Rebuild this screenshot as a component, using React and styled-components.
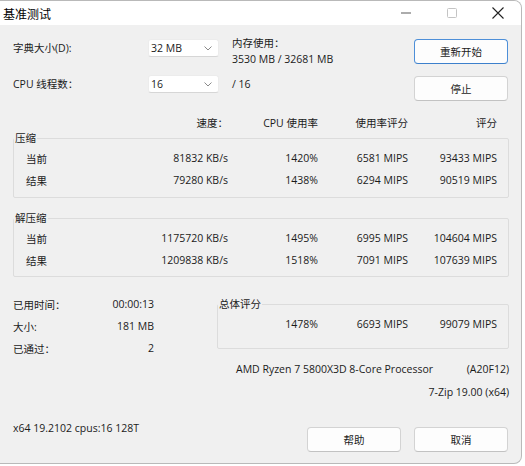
import React from 'react'
import styled, { createGlobalStyle } from 'styled-components'

const GlobalStyle = createGlobalStyle`
  html, body {
    margin: 0;
    background: #ffffff;
  }
  * {
    box-sizing: border-box;
  }
`

const Window = styled.div`
  width: 522px;
  height: 464px;
  background: #f0f0f0;
  border: 1px solid #b9b9b9;
  border-left: none;
  border-radius: 0 8px 8px 0;
  overflow: hidden;
  display: flex;
  flex-direction: column;
  font-family: "Open Sans", "Noto Sans CJK SC", sans-serif;
  font-size: 10.5px;
  color: #1b1b1b;
`

const TitleBar = styled.div`
  height: 24px;
  background: #ffffff;
  display: flex;
  align-items: center;
  padding-left: 3px;
`

const Title = styled.div`
  font-family: "Noto Sans CJK SC", sans-serif;
  font-size: 12px;
  color: #000;
`

const Controls = styled.div`
  margin-left: auto;
  display: flex;
  height: 100%;
`

const Control = styled.div`
  width: 46px;
  height: 100%;
  display: flex;
  align-items: center;
  justify-content: center;
`

const Body = styled.div`
  flex: 1;
  padding-left: 13px;
  width: 509px;
  display: flex;
  flex-direction: column;
`

const TopGrid = styled.div`
  display: grid;
  grid-template-columns: 135px 84px 182px 94px;
  grid-template-rows: 36px 26px;
  align-items: start;
  margin-top: 14px;
`

const Label = styled.div`
  line-height: 18px;
  white-space: nowrap;
`

const Combo = styled.div`
  width: 71px;
  height: 18px;
  background: #ffffff;
  border: 1px solid #ececec;
  border-bottom-color: #d6d6d6;
  border-radius: 3px;
  display: flex;
  align-items: center;
  justify-content: space-between;
  padding: 0 6px 0 2px;
  line-height: 16px;
`

const Memory = styled.div`
  margin-top: -4px;
  line-height: 16px;
  white-space: nowrap;
`

const Button = styled.div`
  width: 94px;
  height: 25px;
  margin-top: ${p => p.$top || 0}px;
  background: #fdfdfd;
  border: 1px solid ${p => (p.$primary ? '#4d8fd8' : '#d3d3d3')};
  border-bottom-color: ${p => (p.$primary ? '#3d80cc' : '#c2c2c2')};
  border-radius: 4px;
  display: flex;
  align-items: center;
  justify-content: center;
  font-family: "Noto Sans CJK SC", sans-serif;
  font-size: 10.5px;
`

const Row = styled.div`
  display: grid;
  grid-template-columns: ${p => p.$cols};
  height: ${p => p.$h || 22}px;
  margin-top: ${p => p.$top || 0}px;
  align-items: center;
  white-space: nowrap;
`

const Cell = styled.div`
  text-align: ${p => (p.$left ? 'left' : 'right')};
`

const Group = styled.fieldset`
  margin: ${p => p.$top || 0}px 0 0 ${p => p.$left || 0}px;
  padding: 0 0 ${p => p.$pb}px 0;
  width: ${p => p.$w}px;
  border: 1px solid #dcdcdc;
  border-radius: 2px;
  min-inline-size: 0;
`

const Legend = styled.legend`
  padding: 0 1px;
  margin-left: 0;
  line-height: 16px;
  font-family: "Noto Sans CJK SC", sans-serif;
`

const GroupRows = styled.div`
  padding: 1px 0 0 ${p => p.$pl || 0}px;
`

const Bottom = styled.div`
  display: flex;
  align-items: flex-start;
  margin-top: 16px;
`

const Stats = styled.div`
  width: 141px;
`

const InfoLine = styled.div`
  display: flex;
  justify-content: ${p => (p.$end ? 'flex-end' : 'space-between')};
  padding-left: ${p => p.$pl || 0}px;
  line-height: 16px;
  margin-top: ${p => p.$top}px;
  white-space: nowrap;
`

const Footer = styled.div`
  display: flex;
  align-items: flex-start;
  margin-top: 20px;
  padding-right: 1px;
`

const FooterText = styled.div`
  line-height: 16px;
`

const FooterButtons = styled.div`
  margin-left: auto;
  margin-top: 7px;
  display: flex;
  gap: 13px;
`

const Chevron = () => (
  <svg width="8" height="5" viewBox="0 0 8 5">
    <path d="M0.5 0.5 L4 4 L7.5 0.5" fill="none" stroke="#8a8a8a" strokeWidth="1" />
  </svg>
)

const tableCols = lead => `${lead}px 142px 90px 90px 89px`

const compress = [
  ['当前', '81832 KB/s', '1420%', '6581 MIPS', '93433 MIPS'],
  ['结果', '79280 KB/s', '1438%', '6294 MIPS', '90519 MIPS'],
]

const decompress = [
  ['当前', '1175720 KB/s', '1495%', '6995 MIPS', '104604 MIPS'],
  ['结果', '1209838 KB/s', '1518%', '7091 MIPS', '107639 MIPS'],
]

const stats = [
  ['已用时间：', '00:00:13'],
  ['大小:', '181 MB'],
  ['已通过：', '2'],
]

function DataRows({ rows }) {
  return rows.map(r => (
    <Row key={r[0]} $cols={tableCols(60)}>
      <Cell $left>{r[0]}</Cell>
      {r.slice(1).map((v, i) => (
        <Cell key={i}>{v}</Cell>
      ))}
    </Row>
  ))
}

export default function App() {
  return (
    <>
      <GlobalStyle />
      <Window>
        <TitleBar>
          <Title>基准测试</Title>
          <Controls>
            <Control>
              <svg width="10" height="2" viewBox="0 0 10 2">
                <rect x="0" y="0.5" width="10" height="1" fill="#5a5a5a" />
              </svg>
            </Control>
            <Control>
              <svg width="10" height="10" viewBox="0 0 10 10">
                <rect x="0.5" y="0.5" width="9" height="9" rx="1" fill="none" stroke="#c4c4c4" />
              </svg>
            </Control>
            <Control>
              <svg width="12" height="12" viewBox="0 0 12 12">
                <path d="M0.5 0.5 L11.5 11.5 M11.5 0.5 L0.5 11.5" stroke="#222" strokeWidth="1.1" />
              </svg>
            </Control>
          </Controls>
        </TitleBar>

        <Body>
          <TopGrid>
            <Label>字典大小(D):</Label>
            <Combo>
              <span>32 MB</span>
              <Chevron />
            </Combo>
            <Memory>
              <div>内存使用：</div>
              <div>3530 MB / 32681 MB</div>
            </Memory>
            <Button $primary>重新开始</Button>

            <Label>CPU 线程数：</Label>
            <Combo>
              <span>16</span>
              <Chevron />
            </Combo>
            <Label>/ 16</Label>
            <Button $top={1}>停止</Button>
          </TopGrid>

          <Row $cols={tableCols(73)} $h={16} $top={13}>
            <Cell />
            <Cell>速度：</Cell>
            <Cell>CPU 使用率</Cell>
            <Cell>使用率评分</Cell>
            <Cell>评分</Cell>
          </Row>

          <Group $w={496} $pb={6}>
            <Legend>压缩</Legend>
            <GroupRows $pl={12}>
              <DataRows rows={compress} />
            </GroupRows>
          </Group>

          <Group $w={496} $pb={5} $top={12}>
            <Legend>解压缩</Legend>
            <GroupRows $pl={12}>
              <DataRows rows={decompress} />
            </GroupRows>
          </Group>

          <Bottom>
            <Stats>
              {stats.map(([k, v]) => (
                <Row key={k} $cols="1fr auto">
                  <Cell $left>{k}</Cell>
                  <Cell>{v}</Cell>
                </Row>
              ))}
            </Stats>
            <Group $w={292} $pb={13} $top={3} $left={63}>
              <Legend>总体评分</Legend>
              <GroupRows>
                <Row $cols="100px 90px 89px">
                  <Cell>1478%</Cell>
                  <Cell>6693 MIPS</Cell>
                  <Cell>99079 MIPS</Cell>
                </Row>
              </GroupRows>
            </Group>
          </Bottom>

          <InfoLine $pl={223} $top={2}>
            <span>AMD Ryzen 7 5800X3D 8-Core Processor</span>
            <span>(A20F12)</span>
          </InfoLine>
          <InfoLine $end $top={7}>
            <span>7-Zip 19.00 (x64)</span>
          </InfoLine>

          <Footer>
            <FooterText>x64 19.2102 cpus:16 128T</FooterText>
            <FooterButtons>
              <Button>帮助</Button>
              <Button>取消</Button>
            </FooterButtons>
          </Footer>
        </Body>
      </Window>
    </>
  )
}
